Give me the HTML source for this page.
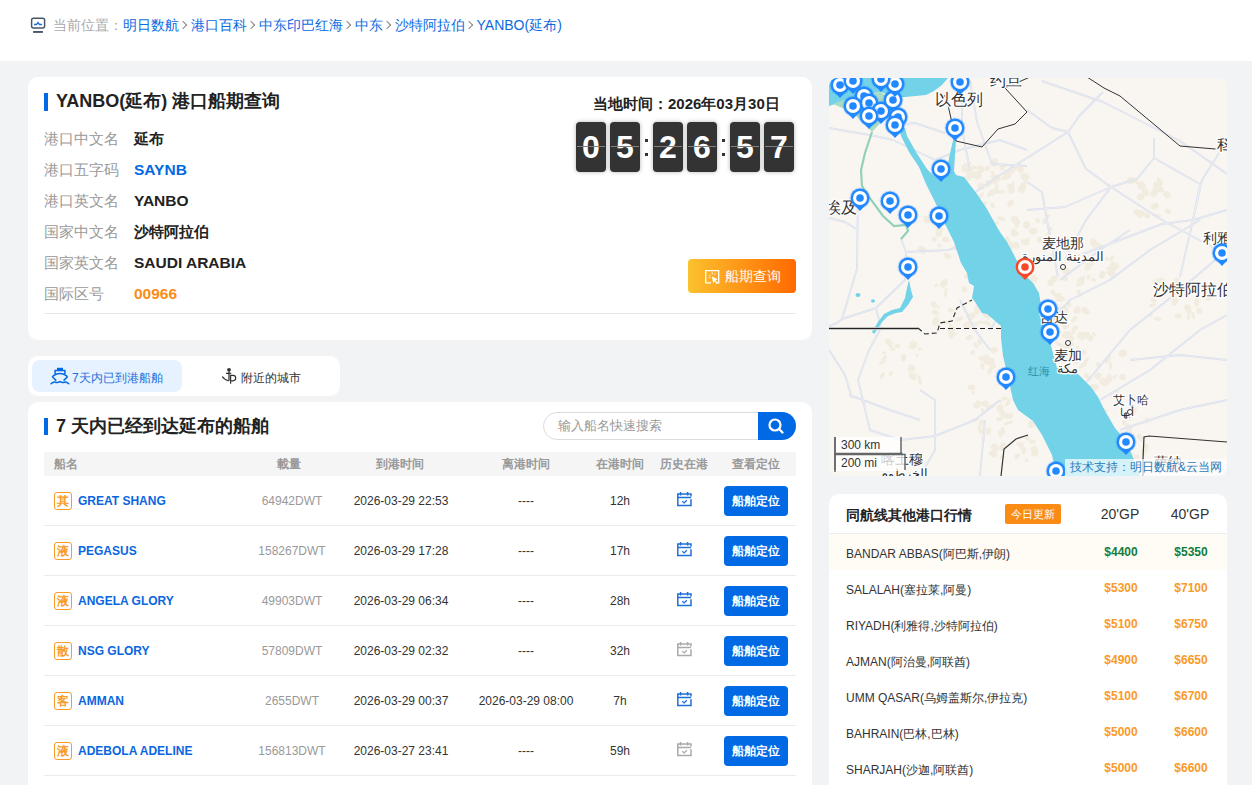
<!DOCTYPE html>
<html><head><meta charset="utf-8">
<style>
*{box-sizing:border-box;margin:0;padding:0}
html,body{width:1252px;height:785px;overflow:hidden}
body{background:#f2f3f5;font-family:"Liberation Sans",sans-serif;color:#333;position:relative}
.abs{position:absolute}
.hdr{left:0;top:0;width:1252px;height:61px;background:#fff}
.bc{left:52.5px;top:14px;font-size:14px;line-height:22px;white-space:nowrap;color:#aaa}
.bc a{color:#0c6be0;text-decoration:none}
.bc i{display:inline-block;width:6px;height:6px;border-right:1px solid #888;border-top:1px solid #888;transform:rotate(45deg);margin:0 5px 2px 1px}
.card{background:#fff;border-radius:10px}
.ttl{font-size:18px;font-weight:bold;color:#222;line-height:24px;white-space:nowrap}
.bar{width:4px;height:18px;background:#0069e3}
.lbl{font-size:15px;color:#999;line-height:20px;white-space:nowrap}
.val{font-size:15px;font-weight:bold;color:#222;line-height:20px;white-space:nowrap}
.dg{width:30px;height:50px;background:#333;border-radius:4px;color:#fff;font-size:32px;font-weight:bold;text-align:center;line-height:51px;box-shadow:0 0 4px rgba(0,0,0,.3)}
.dg:after{content:"";position:absolute;left:1px;right:1px;top:24px;height:1px;background:#808080}
.col{font-size:35px;font-weight:bold;color:#333;line-height:35px}
.tabtxt{font-size:12px;line-height:16px;white-space:nowrap}
.th{top:452px;height:24px;line-height:24px;font-size:12px;font-weight:bold;color:#999;text-align:center;white-space:nowrap}
.td{height:50px;line-height:50px;font-size:12px;color:#333;text-align:center;white-space:nowrap}
.sep{left:44px;width:752px;height:1px;background:#ebebeb}
.badge{width:18px;height:18px;border:1px solid #fa9a28;border-radius:3px;color:#fa9a28;font-size:12px;font-weight:bold;line-height:16px;text-align:center}
.nm{font-size:12px;font-weight:bold;color:#0a66e0;line-height:16px;white-space:nowrap}
.btn{width:64px;height:30px;border-radius:4px;background:#0069e3;color:#fff;font-size:12px;font-weight:bold;line-height:30px;text-align:center}
.pr{font-size:12px;line-height:40px;color:#333;white-space:nowrap}
.pv{font-size:12px;line-height:37px;font-weight:bold;color:#fa9a28;text-align:center;width:70px;white-space:nowrap}
</style></head><body>
<div class="abs hdr"></div>
<svg class="abs" style="left:30px;top:17px" width="16" height="16" viewBox="0 0 16 16">
<rect x="1.6" y="1.3" width="13" height="9.8" rx="2" fill="none" stroke="#4a5568" stroke-width="1.5"/>
<path d="M4 7.5h2.5l1.5-2 1.5 2H12" fill="none" stroke="#1e6fd9" stroke-width="1.3"/>
<rect x="3.1" y="14" width="9.8" height="1.9" fill="#4a5568"/>
</svg>
<div class="abs bc">当前位置：<a>明日数航</a><i></i><a>港口百科</a><i></i><a>中东印巴红海</a><i></i><a>中东</a><i></i><a>沙特阿拉伯</a><i></i><a>YANBO(延布)</a></div>

<!-- card 1 -->
<div class="abs card" style="left:28px;top:77px;width:784px;height:263px"></div>
<div class="abs bar" style="left:44px;top:93px"></div>
<div class="abs ttl" style="left:56px;top:89px">YANBO(延布) 港口船期查询</div>
<div class="abs lbl" style="left:44px;top:129px">港口中文名</div>
<div class="abs val" style="left:134px;top:129px">延布</div>
<div class="abs lbl" style="left:44px;top:160px">港口五字码</div>
<div class="abs val" style="left:134px;top:160px;color:#0069e3;font-size:15.5px">SAYNB</div>
<div class="abs lbl" style="left:44px;top:191px">港口英文名</div>
<div class="abs val" style="left:134px;top:191px;font-size:15.5px">YANBO</div>
<div class="abs lbl" style="left:44px;top:222px">国家中文名</div>
<div class="abs val" style="left:134px;top:222px">沙特阿拉伯</div>
<div class="abs lbl" style="left:44px;top:253px">国家英文名</div>
<div class="abs val" style="left:134px;top:253px;font-size:15.5px">SAUDI ARABIA</div>
<div class="abs lbl" style="left:44px;top:284px">国际区号</div>
<div class="abs val" style="left:134px;top:284px;color:#fa8c16;font-size:15.5px">00966</div>
<div class="abs" style="left:44px;top:313px;width:752px;height:1px;background:#e8e8e8"></div>

<div class="abs val" style="left:593px;top:94px">当地时间：2026年03月30日</div>
<div class="abs dg" style="left:576px;top:122px">0</div>
<div class="abs dg" style="left:610px;top:122px">5</div>
<div class="abs" style="left:645px;top:139px;width:3px;height:3px;background:#333"></div><div class="abs" style="left:645px;top:152.5px;width:3px;height:3px;background:#333"></div>
<div class="abs dg" style="left:653px;top:122px">2</div>
<div class="abs dg" style="left:687px;top:122px">6</div>
<div class="abs" style="left:722px;top:139px;width:3px;height:3px;background:#333"></div><div class="abs" style="left:722px;top:152.5px;width:3px;height:3px;background:#333"></div>
<div class="abs dg" style="left:730px;top:122px">5</div>
<div class="abs dg" style="left:764px;top:122px">7</div>

<div class="abs" style="left:688px;top:259px;width:108px;height:34px;border-radius:4px;background:linear-gradient(90deg,#fcc12e,#ff6a00)"></div>
<svg class="abs" style="left:704px;top:269px" width="17" height="17" viewBox="0 0 17 17">
<path d="M7 13.8H1.7V1.7h13v12.1h-3" fill="none" stroke="#fff" stroke-width="1.3"/>
<path d="M8 7.5l1.2 7 1.3-2.2 2.3 2.4 0.9-0.9-2.3-2.3 2.3-1.2z" fill="#fff"/>
<path d="M8.2 3.3v2 M5 5.8l1.5 1 M11.4 4.4l-1.2 1.4 M4.6 8.7h1.8" stroke="#fff" stroke-width="1"/>
</svg>
<div class="abs" style="left:725px;top:266px;font-size:14px;line-height:20px;color:#fff">船期查询</div>


<!-- tabs -->
<div class="abs card" style="left:28px;top:356px;width:312px;height:40px"></div>
<div class="abs" style="left:32px;top:360px;width:150px;height:32px;border-radius:8px;background:#e6f2ff"></div>
<svg class="abs" style="left:46px;top:362px" width="40" height="30" viewBox="46 362 40 30">
<rect x="57" y="367.8" width="6" height="2.6" fill="#0069e3"/>
<path d="M55.1 374.3V370.6H64.9V374.3" fill="none" stroke="#0069e3" stroke-width="1.5"/>
<path d="M56.2 380.6L52.6 377Q52.4 376.4 53.2 375.9Q56.5 373.6 59.9 373.6Q63.3 373.6 66.6 375.9Q67.4 376.4 67.2 377L63.6 380.6" fill="none" stroke="#0069e3" stroke-width="1.5" stroke-linejoin="round"/>
<path d="M51 383.8Q53.5 381.6 55.4 382.2Q57.6 383 59.9 381.6Q62.2 383 64.4 382.2Q66.3 381.6 68.8 383.8" fill="none" stroke="#0069e3" stroke-width="1.5" stroke-linecap="round"/>
</svg>
<div class="abs tabtxt" style="left:72px;top:370px;color:#1e6fd9">7天内已到港船舶</div>
<svg class="abs" style="left:216px;top:362px" width="30" height="30" viewBox="216 362 30 30">
<circle cx="229" cy="369.8" r="1.9" fill="#333"/>
<path d="M226 373.4h5.2 M229 371.5v9.3 M222.3 376.5Q224 379.5 228.6 380.8" fill="none" stroke="#333" stroke-width="1.3"/>
<path d="M230.6 383.8V375.4h2.4a2.7 2.7 0 0 1 0 5.4h-2.4" fill="none" stroke="#333" stroke-width="1.2"/>
</svg>
<div class="abs tabtxt" style="left:241px;top:370px;color:#333">附近的城市</div>

<!-- table card -->
<div class="abs card" style="left:28px;top:402px;width:784px;height:400px"></div>
<div class="abs bar" style="left:44px;top:418px;height:17px"></div>
<div class="abs ttl" style="left:56px;top:414px">7 天内已经到达延布的船舶</div>
<div class="abs" style="left:543px;top:412px;width:230px;height:28px;border:1px solid #dcdcdc;border-radius:14px"></div>
<div class="abs" style="left:558px;top:416px;font-size:13px;line-height:20px;color:#999">输入船名快速搜索</div>
<div class="abs" style="left:758px;top:412px;width:38px;height:28px;background:#0069e3;border-radius:0 14px 14px 0"></div>
<svg class="abs" style="left:767px;top:417px" width="18" height="18" viewBox="0 0 18 18">
<circle cx="8" cy="8" r="5.5" fill="none" stroke="#fff" stroke-width="2.2"/>
<path d="M12 12l3.5 3.5" stroke="#fff" stroke-width="2.4" stroke-linecap="round"/>
</svg>
<div class="abs" style="left:44px;top:452px;width:752px;height:24px;background:#f5f5f5"></div>
<div class="abs th" style="left:54px;text-align:left">船名</div>
<div class="abs th" style="left:249px;width:80px">載量</div>
<div class="abs th" style="left:340px;width:120px">到港时间</div>
<div class="abs th" style="left:466px;width:120px">离港时间</div>
<div class="abs th" style="left:580px;width:80px">在港时间</div>
<div class="abs th" style="left:644px;width:80px">历史在港</div>
<div class="abs th" style="left:716px;width:80px">查看定位</div>
<div class="abs badge" style="left:54px;top:492px">其</div>
<div class="abs nm" style="left:78px;top:493px">GREAT SHANG</div>
<div class="abs td" style="left:242px;top:476px;width:100px;color:#999">64942DWT</div>
<div class="abs td" style="left:331px;top:476px;width:140px">2026-03-29 22:53</div>
<div class="abs td" style="left:456px;top:476px;width:140px">----</div>
<div class="abs td" style="left:580px;top:476px;width:80px">12h</div>
<svg class="abs" style="left:670px;top:486px" width="30" height="30" viewBox="670 486 30 30">
<path d="M691 496.5V493.9H677.8V505.4H691V499.3" fill="none" stroke="#1e6fd9" stroke-width="1.5"/>
<path d="M677.8 497.4H691 M680.6 492v3.4 M687.6 492v3.4" stroke="#1e6fd9" stroke-width="1.5"/>
<path d="M682.2 501.2l2 1.7 2.6-2.6" fill="none" stroke="#1e6fd9" stroke-width="1.3"/>
</svg>
<div class="abs btn" style="left:724px;top:486px">船舶定位</div>
<div class="abs sep" style="top:525px"></div>
<div class="abs badge" style="left:54px;top:542px">液</div>
<div class="abs nm" style="left:78px;top:543px">PEGASUS</div>
<div class="abs td" style="left:242px;top:526px;width:100px;color:#999">158267DWT</div>
<div class="abs td" style="left:331px;top:526px;width:140px">2026-03-29 17:28</div>
<div class="abs td" style="left:456px;top:526px;width:140px">----</div>
<div class="abs td" style="left:580px;top:526px;width:80px">17h</div>
<svg class="abs" style="left:670px;top:536px" width="30" height="30" viewBox="670 486 30 30">
<path d="M691 496.5V493.9H677.8V505.4H691V499.3" fill="none" stroke="#1e6fd9" stroke-width="1.5"/>
<path d="M677.8 497.4H691 M680.6 492v3.4 M687.6 492v3.4" stroke="#1e6fd9" stroke-width="1.5"/>
<path d="M682.2 501.2l2 1.7 2.6-2.6" fill="none" stroke="#1e6fd9" stroke-width="1.3"/>
</svg>
<div class="abs btn" style="left:724px;top:536px">船舶定位</div>
<div class="abs sep" style="top:575px"></div>
<div class="abs badge" style="left:54px;top:592px">液</div>
<div class="abs nm" style="left:78px;top:593px">ANGELA GLORY</div>
<div class="abs td" style="left:242px;top:576px;width:100px;color:#999">49903DWT</div>
<div class="abs td" style="left:331px;top:576px;width:140px">2026-03-29 06:34</div>
<div class="abs td" style="left:456px;top:576px;width:140px">----</div>
<div class="abs td" style="left:580px;top:576px;width:80px">28h</div>
<svg class="abs" style="left:670px;top:586px" width="30" height="30" viewBox="670 486 30 30">
<path d="M691 496.5V493.9H677.8V505.4H691V499.3" fill="none" stroke="#1e6fd9" stroke-width="1.5"/>
<path d="M677.8 497.4H691 M680.6 492v3.4 M687.6 492v3.4" stroke="#1e6fd9" stroke-width="1.5"/>
<path d="M682.2 501.2l2 1.7 2.6-2.6" fill="none" stroke="#1e6fd9" stroke-width="1.3"/>
</svg>
<div class="abs btn" style="left:724px;top:586px">船舶定位</div>
<div class="abs sep" style="top:625px"></div>
<div class="abs badge" style="left:54px;top:642px">散</div>
<div class="abs nm" style="left:78px;top:643px">NSG GLORY</div>
<div class="abs td" style="left:242px;top:626px;width:100px;color:#999">57809DWT</div>
<div class="abs td" style="left:331px;top:626px;width:140px">2026-03-29 02:32</div>
<div class="abs td" style="left:456px;top:626px;width:140px">----</div>
<div class="abs td" style="left:580px;top:626px;width:80px">32h</div>
<svg class="abs" style="left:670px;top:636px" width="30" height="30" viewBox="670 486 30 30">
<path d="M691 496.5V493.9H677.8V505.4H691V499.3" fill="none" stroke="#aaa" stroke-width="1.5"/>
<path d="M677.8 497.4H691 M680.6 492v3.4 M687.6 492v3.4" stroke="#aaa" stroke-width="1.5"/>
<path d="M682.2 501.2l2 1.7 2.6-2.6" fill="none" stroke="#aaa" stroke-width="1.3"/>
</svg>
<div class="abs btn" style="left:724px;top:636px">船舶定位</div>
<div class="abs sep" style="top:675px"></div>
<div class="abs badge" style="left:54px;top:692px">客</div>
<div class="abs nm" style="left:78px;top:693px">AMMAN</div>
<div class="abs td" style="left:242px;top:676px;width:100px;color:#999">2655DWT</div>
<div class="abs td" style="left:331px;top:676px;width:140px">2026-03-29 00:37</div>
<div class="abs td" style="left:456px;top:676px;width:140px">2026-03-29 08:00</div>
<div class="abs td" style="left:580px;top:676px;width:80px">7h</div>
<svg class="abs" style="left:670px;top:686px" width="30" height="30" viewBox="670 486 30 30">
<path d="M691 496.5V493.9H677.8V505.4H691V499.3" fill="none" stroke="#1e6fd9" stroke-width="1.5"/>
<path d="M677.8 497.4H691 M680.6 492v3.4 M687.6 492v3.4" stroke="#1e6fd9" stroke-width="1.5"/>
<path d="M682.2 501.2l2 1.7 2.6-2.6" fill="none" stroke="#1e6fd9" stroke-width="1.3"/>
</svg>
<div class="abs btn" style="left:724px;top:686px">船舶定位</div>
<div class="abs sep" style="top:725px"></div>
<div class="abs badge" style="left:54px;top:742px">液</div>
<div class="abs nm" style="left:78px;top:743px">ADEBOLA ADELINE</div>
<div class="abs td" style="left:242px;top:726px;width:100px;color:#999">156813DWT</div>
<div class="abs td" style="left:331px;top:726px;width:140px">2026-03-27 23:41</div>
<div class="abs td" style="left:456px;top:726px;width:140px">----</div>
<div class="abs td" style="left:580px;top:726px;width:80px">59h</div>
<svg class="abs" style="left:670px;top:736px" width="30" height="30" viewBox="670 486 30 30">
<path d="M691 496.5V493.9H677.8V505.4H691V499.3" fill="none" stroke="#aaa" stroke-width="1.5"/>
<path d="M677.8 497.4H691 M680.6 492v3.4 M687.6 492v3.4" stroke="#aaa" stroke-width="1.5"/>
<path d="M682.2 501.2l2 1.7 2.6-2.6" fill="none" stroke="#aaa" stroke-width="1.3"/>
</svg>
<div class="abs btn" style="left:724px;top:736px">船舶定位</div>
<div class="abs sep" style="top:775px"></div>

<!-- right -->
<!--MAP--><svg class="abs" style="left:829px;top:78px;border-radius:8px" width="398" height="398" viewBox="829 78 398 398">
<defs><clipPath id="mc"><rect x="829" y="78" width="398" height="398" rx="8"/></clipPath><filter id="bl"><feGaussianBlur stdDeviation="2"/></filter></defs>
<g clip-path="url(#mc)">
<rect x="829" y="78" width="398" height="398" fill="#f9f6f1"/>
<g fill="#f1ecdf">
<ellipse cx="991.2" cy="182.5" rx="3.8" ry="1.7" transform="rotate(137 991.2 182.5)"/>
<ellipse cx="979.7" cy="204.1" rx="4.7" ry="2.0" transform="rotate(22 979.7 204.1)"/>
<ellipse cx="996.7" cy="178.5" rx="1.8" ry="2.6" transform="rotate(144 996.7 178.5)"/>
<ellipse cx="981.2" cy="186.2" rx="3.7" ry="3.9" transform="rotate(147 981.2 186.2)"/>
<ellipse cx="1004.3" cy="177.5" rx="2.3" ry="2.9" transform="rotate(34 1004.3 177.5)"/>
<ellipse cx="989.5" cy="182.2" rx="1.9" ry="2.3" transform="rotate(174 989.5 182.2)"/>
<ellipse cx="984.0" cy="204.1" rx="3.7" ry="2.4" transform="rotate(140 984.0 204.1)"/>
<ellipse cx="1010.6" cy="203.2" rx="3.7" ry="2.7" transform="rotate(136 1010.6 203.2)"/>
<ellipse cx="996.4" cy="190.7" rx="3.5" ry="2.6" transform="rotate(76 996.4 190.7)"/>
<ellipse cx="987.4" cy="184.0" rx="4.2" ry="1.7" transform="rotate(76 987.4 184.0)"/>
<ellipse cx="1001.3" cy="218.8" rx="4.1" ry="2.2" transform="rotate(18 1001.3 218.8)"/>
<ellipse cx="980.9" cy="195.9" rx="4.1" ry="1.9" transform="rotate(125 980.9 195.9)"/>
<ellipse cx="996.1" cy="223.1" rx="1.8" ry="2.9" transform="rotate(80 996.1 223.1)"/>
<ellipse cx="992.0" cy="192.5" rx="3.2" ry="3.5" transform="rotate(17 992.0 192.5)"/>
<ellipse cx="1017.0" cy="222.2" rx="3.2" ry="3.2" transform="rotate(15 1017.0 222.2)"/>
<ellipse cx="1011.6" cy="190.5" rx="3.5" ry="3.2" transform="rotate(114 1011.6 190.5)"/>
<ellipse cx="989.2" cy="194.3" rx="3.8" ry="1.6" transform="rotate(118 989.2 194.3)"/>
<ellipse cx="992.8" cy="205.5" rx="3.2" ry="2.0" transform="rotate(73 992.8 205.5)"/>
<ellipse cx="1015.2" cy="219.9" rx="2.9" ry="3.7" transform="rotate(20 1015.2 219.9)"/>
<ellipse cx="1016.7" cy="226.1" rx="2.5" ry="1.8" transform="rotate(110 1016.7 226.1)"/>
<ellipse cx="1044.6" cy="221.1" rx="3.0" ry="2.4" transform="rotate(97 1044.6 221.1)"/>
<ellipse cx="1048.3" cy="216.0" rx="2.1" ry="2.1" transform="rotate(59 1048.3 216.0)"/>
<ellipse cx="1010.5" cy="243.2" rx="2.1" ry="2.2" transform="rotate(37 1010.5 243.2)"/>
<ellipse cx="1026.8" cy="224.8" rx="3.5" ry="3.9" transform="rotate(176 1026.8 224.8)"/>
<ellipse cx="1044.4" cy="248.0" rx="3.8" ry="3.3" transform="rotate(116 1044.4 248.0)"/>
<ellipse cx="1046.0" cy="241.2" rx="4.6" ry="3.5" transform="rotate(100 1046.0 241.2)"/>
<ellipse cx="1025.9" cy="225.8" rx="3.2" ry="2.5" transform="rotate(48 1025.9 225.8)"/>
<ellipse cx="1012.7" cy="218.4" rx="2.1" ry="2.4" transform="rotate(13 1012.7 218.4)"/>
<ellipse cx="1014.1" cy="232.7" rx="3.4" ry="3.9" transform="rotate(157 1014.1 232.7)"/>
<ellipse cx="1011.0" cy="245.0" rx="3.6" ry="1.9" transform="rotate(64 1011.0 245.0)"/>
<ellipse cx="1048.2" cy="234.1" rx="3.2" ry="1.8" transform="rotate(124 1048.2 234.1)"/>
<ellipse cx="1049.7" cy="228.6" rx="3.2" ry="1.7" transform="rotate(26 1049.7 228.6)"/>
<ellipse cx="1040.0" cy="239.6" rx="3.2" ry="3.2" transform="rotate(132 1040.0 239.6)"/>
<ellipse cx="1010.9" cy="248.0" rx="3.3" ry="1.9" transform="rotate(139 1010.9 248.0)"/>
<ellipse cx="1046.6" cy="240.3" rx="2.5" ry="3.1" transform="rotate(23 1046.6 240.3)"/>
<ellipse cx="1037.8" cy="220.4" rx="2.8" ry="1.9" transform="rotate(57 1037.8 220.4)"/>
<ellipse cx="1066.0" cy="316.7" rx="2.7" ry="2.1" transform="rotate(49 1066.0 316.7)"/>
<ellipse cx="1074.2" cy="319.1" rx="4.1" ry="2.1" transform="rotate(132 1074.2 319.1)"/>
<ellipse cx="1064.8" cy="313.9" rx="5.0" ry="3.5" transform="rotate(120 1064.8 313.9)"/>
<ellipse cx="1057.8" cy="311.6" rx="4.8" ry="2.6" transform="rotate(89 1057.8 311.6)"/>
<ellipse cx="1078.7" cy="291.9" rx="2.3" ry="2.1" transform="rotate(50 1078.7 291.9)"/>
<ellipse cx="1060.1" cy="299.0" rx="4.9" ry="3.0" transform="rotate(0 1060.1 299.0)"/>
<ellipse cx="1064.4" cy="309.2" rx="4.3" ry="1.7" transform="rotate(169 1064.4 309.2)"/>
<ellipse cx="1053.6" cy="293.3" rx="4.0" ry="2.0" transform="rotate(45 1053.6 293.3)"/>
<ellipse cx="1063.0" cy="308.2" rx="1.8" ry="3.9" transform="rotate(101 1063.0 308.2)"/>
<ellipse cx="1063.9" cy="314.6" rx="1.8" ry="1.9" transform="rotate(32 1063.9 314.6)"/>
<ellipse cx="1050.8" cy="305.4" rx="3.1" ry="3.1" transform="rotate(156 1050.8 305.4)"/>
<ellipse cx="1074.8" cy="328.8" rx="3.8" ry="2.4" transform="rotate(140 1074.8 328.8)"/>
<ellipse cx="1066.4" cy="271.3" rx="4.3" ry="3.3" transform="rotate(26 1066.4 271.3)"/>
<ellipse cx="1065.8" cy="326.0" rx="3.0" ry="3.7" transform="rotate(54 1065.8 326.0)"/>
<ellipse cx="1050.8" cy="282.8" rx="3.3" ry="3.4" transform="rotate(83 1050.8 282.8)"/>
<ellipse cx="1057.8" cy="295.1" rx="2.0" ry="3.8" transform="rotate(90 1057.8 295.1)"/>
<ellipse cx="1076.9" cy="309.7" rx="4.4" ry="2.8" transform="rotate(128 1076.9 309.7)"/>
<ellipse cx="1053.9" cy="279.1" rx="3.3" ry="3.7" transform="rotate(46 1053.9 279.1)"/>
<ellipse cx="1079.3" cy="361.0" rx="2.0" ry="1.9" transform="rotate(158 1079.3 361.0)"/>
<ellipse cx="1084.0" cy="352.3" rx="2.6" ry="2.8" transform="rotate(142 1084.0 352.3)"/>
<ellipse cx="1074.3" cy="361.1" rx="4.6" ry="1.6" transform="rotate(48 1074.3 361.1)"/>
<ellipse cx="1066.1" cy="360.9" rx="3.3" ry="2.9" transform="rotate(16 1066.1 360.9)"/>
<ellipse cx="1072.7" cy="354.5" rx="3.3" ry="2.8" transform="rotate(177 1072.7 354.5)"/>
<ellipse cx="1066.1" cy="350.3" rx="4.3" ry="2.8" transform="rotate(63 1066.1 350.3)"/>
<ellipse cx="1083.0" cy="365.1" rx="4.8" ry="2.1" transform="rotate(143 1083.0 365.1)"/>
<ellipse cx="1090.7" cy="338.1" rx="3.1" ry="2.5" transform="rotate(100 1090.7 338.1)"/>
<ellipse cx="1072.7" cy="332.9" rx="2.3" ry="1.7" transform="rotate(171 1072.7 332.9)"/>
<ellipse cx="1067.1" cy="334.9" rx="4.2" ry="3.8" transform="rotate(164 1067.1 334.9)"/>
<ellipse cx="1081.4" cy="335.7" rx="4.6" ry="3.9" transform="rotate(56 1081.4 335.7)"/>
<ellipse cx="1084.9" cy="333.8" rx="4.6" ry="1.9" transform="rotate(170 1084.9 333.8)"/>
<ellipse cx="1088.3" cy="336.5" rx="3.0" ry="2.8" transform="rotate(86 1088.3 336.5)"/>
<ellipse cx="1071.9" cy="344.3" rx="1.8" ry="2.4" transform="rotate(86 1071.9 344.3)"/>
<ellipse cx="1077.2" cy="347.6" rx="1.6" ry="2.3" transform="rotate(159 1077.2 347.6)"/>
<ellipse cx="1066.8" cy="368.4" rx="1.9" ry="3.8" transform="rotate(58 1066.8 368.4)"/>
<ellipse cx="1093.9" cy="334.2" rx="2.4" ry="1.6" transform="rotate(46 1093.9 334.2)"/>
<ellipse cx="1065.8" cy="335.2" rx="3.0" ry="3.8" transform="rotate(66 1065.8 335.2)"/>
<ellipse cx="1091.2" cy="401.8" rx="3.3" ry="2.7" transform="rotate(83 1091.2 401.8)"/>
<ellipse cx="1078.6" cy="377.9" rx="3.9" ry="2.6" transform="rotate(18 1078.6 377.9)"/>
<ellipse cx="1085.8" cy="375.8" rx="1.8" ry="2.2" transform="rotate(155 1085.8 375.8)"/>
<ellipse cx="1109.2" cy="378.3" rx="4.5" ry="2.6" transform="rotate(86 1109.2 378.3)"/>
<ellipse cx="1114.8" cy="395.9" rx="4.7" ry="3.1" transform="rotate(11 1114.8 395.9)"/>
<ellipse cx="1096.1" cy="386.9" rx="1.9" ry="1.9" transform="rotate(12 1096.1 386.9)"/>
<ellipse cx="1082.2" cy="421.6" rx="3.7" ry="2.8" transform="rotate(52 1082.2 421.6)"/>
<ellipse cx="1086.6" cy="400.0" rx="2.1" ry="2.4" transform="rotate(4 1086.6 400.0)"/>
<ellipse cx="1114.8" cy="376.8" rx="1.6" ry="2.8" transform="rotate(48 1114.8 376.8)"/>
<ellipse cx="1095.6" cy="387.3" rx="3.1" ry="3.1" transform="rotate(166 1095.6 387.3)"/>
<ellipse cx="1092.3" cy="399.8" rx="4.4" ry="2.5" transform="rotate(129 1092.3 399.8)"/>
<ellipse cx="1087.3" cy="385.8" rx="2.3" ry="2.0" transform="rotate(180 1087.3 385.8)"/>
<ellipse cx="1104.2" cy="382.0" rx="5.0" ry="4.0" transform="rotate(33 1104.2 382.0)"/>
<ellipse cx="1075.6" cy="406.3" rx="4.6" ry="2.6" transform="rotate(14 1075.6 406.3)"/>
<ellipse cx="1078.4" cy="417.1" rx="4.5" ry="3.2" transform="rotate(72 1078.4 417.1)"/>
<ellipse cx="1099.0" cy="409.6" rx="1.7" ry="2.0" transform="rotate(68 1099.0 409.6)"/>
<ellipse cx="1092.8" cy="388.2" rx="4.9" ry="3.9" transform="rotate(140 1092.8 388.2)"/>
<ellipse cx="1087.9" cy="376.7" rx="4.6" ry="2.0" transform="rotate(46 1087.9 376.7)"/>
<ellipse cx="1105.0" cy="446.4" rx="3.2" ry="2.8" transform="rotate(51 1105.0 446.4)"/>
<ellipse cx="1114.9" cy="458.3" rx="1.8" ry="3.5" transform="rotate(36 1114.9 458.3)"/>
<ellipse cx="1121.0" cy="436.3" rx="1.6" ry="2.3" transform="rotate(59 1121.0 436.3)"/>
<ellipse cx="1108.4" cy="463.7" rx="4.5" ry="1.9" transform="rotate(152 1108.4 463.7)"/>
<ellipse cx="1120.6" cy="444.8" rx="4.9" ry="1.9" transform="rotate(158 1120.6 444.8)"/>
<ellipse cx="1130.7" cy="436.3" rx="4.4" ry="3.7" transform="rotate(160 1130.7 436.3)"/>
<ellipse cx="1122.2" cy="456.0" rx="3.3" ry="3.8" transform="rotate(129 1122.2 456.0)"/>
<ellipse cx="1127.7" cy="459.4" rx="1.6" ry="3.2" transform="rotate(174 1127.7 459.4)"/>
<ellipse cx="1143.2" cy="454.3" rx="1.8" ry="1.6" transform="rotate(163 1143.2 454.3)"/>
<ellipse cx="1119.4" cy="438.1" rx="4.4" ry="2.9" transform="rotate(160 1119.4 438.1)"/>
<ellipse cx="1105.8" cy="450.9" rx="2.4" ry="2.2" transform="rotate(116 1105.8 450.9)"/>
<ellipse cx="1136.9" cy="457.4" rx="3.3" ry="2.8" transform="rotate(168 1136.9 457.4)"/>
<ellipse cx="1126.0" cy="457.4" rx="3.2" ry="3.5" transform="rotate(67 1126.0 457.4)"/>
<ellipse cx="1114.4" cy="457.7" rx="2.3" ry="3.1" transform="rotate(117 1114.4 457.7)"/>
<ellipse cx="1124.8" cy="446.5" rx="3.2" ry="3.2" transform="rotate(11 1124.8 446.5)"/>
<ellipse cx="1129.7" cy="454.3" rx="1.8" ry="1.9" transform="rotate(65 1129.7 454.3)"/>
<ellipse cx="1131.1" cy="455.8" rx="3.7" ry="1.8" transform="rotate(123 1131.1 455.8)"/>
<ellipse cx="1107.4" cy="443.1" rx="3.9" ry="3.2" transform="rotate(172 1107.4 443.1)"/>
<ellipse cx="1009.7" cy="186.3" rx="2.5" ry="2.7" transform="rotate(30 1009.7 186.3)"/>
<ellipse cx="1024.8" cy="181.5" rx="2.6" ry="1.7" transform="rotate(121 1024.8 181.5)"/>
<ellipse cx="995.5" cy="178.8" rx="4.4" ry="3.9" transform="rotate(115 995.5 178.8)"/>
<ellipse cx="1024.8" cy="176.6" rx="4.7" ry="3.8" transform="rotate(19 1024.8 176.6)"/>
<ellipse cx="1012.4" cy="169.3" rx="3.3" ry="3.9" transform="rotate(33 1012.4 169.3)"/>
<ellipse cx="1013.1" cy="184.0" rx="2.5" ry="1.8" transform="rotate(93 1013.1 184.0)"/>
<ellipse cx="1001.9" cy="191.9" rx="3.2" ry="1.6" transform="rotate(0 1001.9 191.9)"/>
<ellipse cx="1023.5" cy="185.4" rx="2.9" ry="3.3" transform="rotate(106 1023.5 185.4)"/>
<ellipse cx="1005.3" cy="174.5" rx="4.4" ry="1.5" transform="rotate(86 1005.3 174.5)"/>
<ellipse cx="1020.2" cy="168.6" rx="4.7" ry="3.3" transform="rotate(74 1020.2 168.6)"/>
<ellipse cx="1002.6" cy="166.9" rx="2.9" ry="3.7" transform="rotate(19 1002.6 166.9)"/>
<ellipse cx="1005.8" cy="177.8" rx="2.5" ry="1.6" transform="rotate(26 1005.8 177.8)"/>
<ellipse cx="996.5" cy="184.9" rx="3.7" ry="1.9" transform="rotate(68 996.5 184.9)"/>
<ellipse cx="1008.1" cy="174.5" rx="4.2" ry="3.5" transform="rotate(109 1008.1 174.5)"/>
<ellipse cx="1021.5" cy="189.4" rx="3.7" ry="3.8" transform="rotate(141 1021.5 189.4)"/>
<ellipse cx="1011.5" cy="186.6" rx="1.7" ry="3.3" transform="rotate(115 1011.5 186.6)"/>
<ellipse cx="1013.4" cy="169.2" rx="4.5" ry="2.7" transform="rotate(140 1013.4 169.2)"/>
<ellipse cx="998.8" cy="179.2" rx="2.7" ry="2.2" transform="rotate(167 998.8 179.2)"/>
<ellipse cx="972.8" cy="173.1" rx="2.6" ry="2.9" transform="rotate(100 972.8 173.1)"/>
<ellipse cx="968.6" cy="172.9" rx="1.8" ry="2.8" transform="rotate(127 968.6 172.9)"/>
<ellipse cx="981.5" cy="169.1" rx="2.7" ry="3.4" transform="rotate(109 981.5 169.1)"/>
<ellipse cx="969.2" cy="163.8" rx="1.8" ry="2.4" transform="rotate(23 969.2 163.8)"/>
<ellipse cx="974.6" cy="167.4" rx="4.3" ry="2.0" transform="rotate(5 974.6 167.4)"/>
<ellipse cx="987.5" cy="168.3" rx="2.9" ry="2.8" transform="rotate(96 987.5 168.3)"/>
<ellipse cx="973.1" cy="175.0" rx="3.2" ry="2.9" transform="rotate(92 973.1 175.0)"/>
<ellipse cx="968.8" cy="170.1" rx="3.7" ry="3.7" transform="rotate(55 968.8 170.1)"/>
<ellipse cx="967.8" cy="177.9" rx="2.8" ry="3.1" transform="rotate(110 967.8 177.9)"/>
<ellipse cx="993.6" cy="177.0" rx="4.6" ry="1.6" transform="rotate(8 993.6 177.0)"/>
<ellipse cx="977.8" cy="175.3" rx="4.3" ry="3.9" transform="rotate(125 977.8 175.3)"/>
<ellipse cx="965.0" cy="167.8" rx="4.7" ry="3.6" transform="rotate(119 965.0 167.8)"/>
<ellipse cx="994.2" cy="165.0" rx="1.9" ry="1.9" transform="rotate(133 994.2 165.0)"/>
<ellipse cx="994.2" cy="162.2" rx="4.4" ry="3.3" transform="rotate(117 994.2 162.2)"/>
<ellipse cx="967.6" cy="175.5" rx="1.5" ry="1.8" transform="rotate(145 967.6 175.5)"/>
<ellipse cx="992.6" cy="172.9" rx="2.6" ry="1.8" transform="rotate(64 992.6 172.9)"/>
<ellipse cx="980.8" cy="168.7" rx="4.2" ry="1.7" transform="rotate(76 980.8 168.7)"/>
<ellipse cx="980.7" cy="171.7" rx="2.9" ry="2.1" transform="rotate(153 980.7 171.7)"/>
<ellipse cx="950.0" cy="331.5" rx="5.0" ry="2.2" transform="rotate(80 950.0 331.5)"/>
<ellipse cx="975.8" cy="345.4" rx="3.2" ry="2.1" transform="rotate(63 975.8 345.4)"/>
<ellipse cx="951.2" cy="326.5" rx="3.8" ry="1.6" transform="rotate(49 951.2 326.5)"/>
<ellipse cx="969.9" cy="337.0" rx="3.0" ry="2.1" transform="rotate(170 969.9 337.0)"/>
<ellipse cx="967.0" cy="324.8" rx="3.2" ry="3.2" transform="rotate(107 967.0 324.8)"/>
<ellipse cx="964.5" cy="325.9" rx="1.5" ry="2.2" transform="rotate(129 964.5 325.9)"/>
<ellipse cx="952.7" cy="329.8" rx="2.2" ry="3.4" transform="rotate(49 952.7 329.8)"/>
<ellipse cx="959.2" cy="318.9" rx="4.2" ry="2.2" transform="rotate(159 959.2 318.9)"/>
<ellipse cx="969.8" cy="317.5" rx="2.3" ry="2.5" transform="rotate(170 969.8 317.5)"/>
<ellipse cx="952.3" cy="333.8" rx="4.7" ry="1.6" transform="rotate(6 952.3 333.8)"/>
<ellipse cx="989.0" cy="315.7" rx="1.7" ry="1.7" transform="rotate(100 989.0 315.7)"/>
<ellipse cx="968.0" cy="338.5" rx="2.6" ry="1.8" transform="rotate(20 968.0 338.5)"/>
<ellipse cx="987.3" cy="323.2" rx="2.1" ry="3.8" transform="rotate(119 987.3 323.2)"/>
<ellipse cx="951.3" cy="336.6" rx="2.8" ry="2.4" transform="rotate(84 951.3 336.6)"/>
<ellipse cx="967.7" cy="314.4" rx="1.8" ry="1.7" transform="rotate(107 967.7 314.4)"/>
<ellipse cx="988.2" cy="314.9" rx="4.9" ry="2.0" transform="rotate(91 988.2 314.9)"/>
<ellipse cx="980.7" cy="322.3" rx="4.3" ry="1.7" transform="rotate(180 980.7 322.3)"/>
<ellipse cx="968.9" cy="324.9" rx="4.7" ry="2.0" transform="rotate(93 968.9 324.9)"/>
<ellipse cx="999.5" cy="419.0" rx="3.7" ry="2.1" transform="rotate(160 999.5 419.0)"/>
<ellipse cx="1000.7" cy="401.6" rx="1.6" ry="1.7" transform="rotate(15 1000.7 401.6)"/>
<ellipse cx="980.3" cy="429.9" rx="4.6" ry="2.3" transform="rotate(69 980.3 429.9)"/>
<ellipse cx="983.4" cy="438.2" rx="1.7" ry="3.4" transform="rotate(176 983.4 438.2)"/>
<ellipse cx="982.7" cy="411.0" rx="1.5" ry="3.4" transform="rotate(162 982.7 411.0)"/>
<ellipse cx="1007.9" cy="402.6" rx="4.4" ry="1.8" transform="rotate(119 1007.9 402.6)"/>
<ellipse cx="1008.2" cy="415.5" rx="2.4" ry="2.6" transform="rotate(126 1008.2 415.5)"/>
<ellipse cx="975.3" cy="419.9" rx="1.5" ry="3.8" transform="rotate(77 975.3 419.9)"/>
<ellipse cx="1002.9" cy="430.9" rx="3.6" ry="2.3" transform="rotate(81 1002.9 430.9)"/>
<ellipse cx="988.4" cy="431.4" rx="3.6" ry="2.8" transform="rotate(100 988.4 431.4)"/>
<ellipse cx="1000.1" cy="409.9" rx="1.7" ry="1.6" transform="rotate(141 1000.1 409.9)"/>
<ellipse cx="991.8" cy="406.4" rx="3.0" ry="1.8" transform="rotate(18 991.8 406.4)"/>
<ellipse cx="980.6" cy="403.4" rx="1.8" ry="2.7" transform="rotate(114 980.6 403.4)"/>
<ellipse cx="976.9" cy="405.3" rx="3.1" ry="3.7" transform="rotate(60 976.9 405.3)"/>
<ellipse cx="999.9" cy="433.9" rx="3.8" ry="1.8" transform="rotate(75 999.9 433.9)"/>
<ellipse cx="981.8" cy="422.7" rx="2.8" ry="3.3" transform="rotate(50 981.8 422.7)"/>
<ellipse cx="987.6" cy="407.4" rx="2.3" ry="2.2" transform="rotate(148 987.6 407.4)"/>
<ellipse cx="977.5" cy="402.6" rx="2.4" ry="2.1" transform="rotate(134 977.5 402.6)"/>
<ellipse cx="1018.5" cy="278.5" rx="3.8" ry="4.0" transform="rotate(26 1018.5 278.5)"/>
<ellipse cx="1000.4" cy="283.0" rx="2.3" ry="2.6" transform="rotate(95 1000.4 283.0)"/>
<ellipse cx="1003.2" cy="247.6" rx="1.9" ry="2.0" transform="rotate(149 1003.2 247.6)"/>
<ellipse cx="1015.5" cy="234.5" rx="3.3" ry="1.9" transform="rotate(154 1015.5 234.5)"/>
<ellipse cx="1020.8" cy="276.7" rx="4.8" ry="1.8" transform="rotate(152 1020.8 276.7)"/>
<ellipse cx="1056.8" cy="251.0" rx="1.6" ry="2.4" transform="rotate(11 1056.8 251.0)"/>
<ellipse cx="1016.3" cy="245.3" rx="3.6" ry="3.1" transform="rotate(52 1016.3 245.3)"/>
<ellipse cx="1065.2" cy="279.1" rx="2.9" ry="2.4" transform="rotate(158 1065.2 279.1)"/>
<ellipse cx="1025.0" cy="242.2" rx="4.3" ry="2.9" transform="rotate(16 1025.0 242.2)"/>
<ellipse cx="1032.7" cy="277.8" rx="3.8" ry="1.9" transform="rotate(136 1032.7 277.8)"/>
<ellipse cx="1007.3" cy="239.8" rx="3.9" ry="2.5" transform="rotate(72 1007.3 239.8)"/>
<ellipse cx="1053.4" cy="255.1" rx="1.7" ry="3.4" transform="rotate(91 1053.4 255.1)"/>
<ellipse cx="1033.1" cy="231.1" rx="4.2" ry="3.5" transform="rotate(164 1033.1 231.1)"/>
<ellipse cx="1015.8" cy="273.7" rx="2.2" ry="1.5" transform="rotate(40 1015.8 273.7)"/>
<ellipse cx="1033.9" cy="279.2" rx="2.9" ry="3.7" transform="rotate(117 1033.9 279.2)"/>
<ellipse cx="1061.8" cy="237.8" rx="1.7" ry="1.9" transform="rotate(101 1061.8 237.8)"/>
<ellipse cx="1007.1" cy="267.3" rx="2.8" ry="2.8" transform="rotate(37 1007.1 267.3)"/>
<ellipse cx="1027.8" cy="239.7" rx="2.1" ry="1.7" transform="rotate(98 1027.8 239.7)"/>
<ellipse cx="1059.4" cy="344.4" rx="4.9" ry="2.0" transform="rotate(32 1059.4 344.4)"/>
<ellipse cx="1080.2" cy="283.5" rx="4.7" ry="2.3" transform="rotate(155 1080.2 283.5)"/>
<ellipse cx="1085.6" cy="311.0" rx="4.7" ry="3.1" transform="rotate(41 1085.6 311.0)"/>
<ellipse cx="1068.4" cy="348.5" rx="3.7" ry="3.0" transform="rotate(50 1068.4 348.5)"/>
<ellipse cx="1079.8" cy="294.6" rx="2.3" ry="2.5" transform="rotate(132 1079.8 294.6)"/>
<ellipse cx="1039.4" cy="308.7" rx="2.0" ry="3.9" transform="rotate(49 1039.4 308.7)"/>
<ellipse cx="1032.5" cy="325.0" rx="4.2" ry="1.6" transform="rotate(82 1032.5 325.0)"/>
<ellipse cx="1037.1" cy="328.0" rx="3.4" ry="3.1" transform="rotate(78 1037.1 328.0)"/>
<ellipse cx="1068.9" cy="304.7" rx="2.4" ry="2.5" transform="rotate(94 1068.9 304.7)"/>
<ellipse cx="1056.8" cy="315.1" rx="1.6" ry="3.0" transform="rotate(125 1056.8 315.1)"/>
<ellipse cx="1057.9" cy="315.7" rx="3.7" ry="3.5" transform="rotate(45 1057.9 315.7)"/>
<ellipse cx="1078.6" cy="312.0" rx="1.7" ry="2.4" transform="rotate(93 1078.6 312.0)"/>
<ellipse cx="1035.5" cy="315.4" rx="3.3" ry="1.6" transform="rotate(162 1035.5 315.4)"/>
<ellipse cx="1037.8" cy="353.8" rx="2.6" ry="3.3" transform="rotate(20 1037.8 353.8)"/>
<ellipse cx="1033.3" cy="320.3" rx="2.8" ry="3.9" transform="rotate(34 1033.3 320.3)"/>
<ellipse cx="1031.6" cy="285.3" rx="3.6" ry="3.2" transform="rotate(28 1031.6 285.3)"/>
<ellipse cx="1041.6" cy="358.5" rx="3.2" ry="3.9" transform="rotate(42 1041.6 358.5)"/>
<ellipse cx="1071.2" cy="337.7" rx="2.3" ry="3.6" transform="rotate(156 1071.2 337.7)"/>
<ellipse cx="1107.9" cy="359.5" rx="4.6" ry="2.2" transform="rotate(116 1107.9 359.5)"/>
<ellipse cx="1065.1" cy="380.1" rx="4.7" ry="2.0" transform="rotate(67 1065.1 380.1)"/>
<ellipse cx="1098.1" cy="364.2" rx="2.8" ry="2.0" transform="rotate(103 1098.1 364.2)"/>
<ellipse cx="1066.3" cy="406.2" rx="3.9" ry="3.7" transform="rotate(43 1066.3 406.2)"/>
<ellipse cx="1110.4" cy="365.9" rx="4.2" ry="1.6" transform="rotate(92 1110.4 365.9)"/>
<ellipse cx="1122.6" cy="377.2" rx="3.3" ry="3.2" transform="rotate(26 1122.6 377.2)"/>
<ellipse cx="1072.6" cy="382.1" rx="4.5" ry="3.3" transform="rotate(95 1072.6 382.1)"/>
<ellipse cx="1073.5" cy="409.4" rx="3.5" ry="2.4" transform="rotate(20 1073.5 409.4)"/>
<ellipse cx="1086.0" cy="360.6" rx="4.1" ry="1.6" transform="rotate(132 1086.0 360.6)"/>
<ellipse cx="1072.8" cy="388.4" rx="4.9" ry="3.0" transform="rotate(169 1072.8 388.4)"/>
<ellipse cx="1117.7" cy="394.0" rx="4.1" ry="2.1" transform="rotate(74 1117.7 394.0)"/>
<ellipse cx="1098.1" cy="375.9" rx="3.3" ry="3.7" transform="rotate(33 1098.1 375.9)"/>
<ellipse cx="1089.2" cy="386.8" rx="1.7" ry="1.6" transform="rotate(145 1089.2 386.8)"/>
<ellipse cx="1079.8" cy="356.4" rx="2.8" ry="2.1" transform="rotate(149 1079.8 356.4)"/>
<ellipse cx="1076.1" cy="358.0" rx="2.8" ry="3.6" transform="rotate(40 1076.1 358.0)"/>
<ellipse cx="1064.4" cy="406.2" rx="2.4" ry="1.9" transform="rotate(24 1064.4 406.2)"/>
<ellipse cx="1059.5" cy="358.7" rx="3.8" ry="2.2" transform="rotate(67 1059.5 358.7)"/>
<ellipse cx="1122.7" cy="353.4" rx="4.4" ry="3.7" transform="rotate(152 1122.7 353.4)"/>
<ellipse cx="1128.7" cy="427.8" rx="4.8" ry="3.3" transform="rotate(63 1128.7 427.8)"/>
<ellipse cx="1099.9" cy="410.0" rx="1.7" ry="1.6" transform="rotate(47 1099.9 410.0)"/>
<ellipse cx="1104.3" cy="412.3" rx="4.2" ry="1.5" transform="rotate(141 1104.3 412.3)"/>
<ellipse cx="1129.4" cy="417.9" rx="2.9" ry="2.8" transform="rotate(164 1129.4 417.9)"/>
<ellipse cx="1120.4" cy="435.7" rx="4.3" ry="1.9" transform="rotate(79 1120.4 435.7)"/>
<ellipse cx="1093.8" cy="435.0" rx="5.0" ry="3.3" transform="rotate(122 1093.8 435.0)"/>
<ellipse cx="1132.9" cy="410.3" rx="4.5" ry="3.4" transform="rotate(119 1132.9 410.3)"/>
<ellipse cx="1094.8" cy="436.2" rx="2.1" ry="4.0" transform="rotate(66 1094.8 436.2)"/>
<ellipse cx="1103.9" cy="411.6" rx="2.7" ry="3.4" transform="rotate(177 1103.9 411.6)"/>
<ellipse cx="1146.6" cy="420.5" rx="1.7" ry="3.1" transform="rotate(173 1146.6 420.5)"/>
<ellipse cx="1116.2" cy="441.5" rx="3.3" ry="2.2" transform="rotate(164 1116.2 441.5)"/>
<ellipse cx="1145.7" cy="445.8" rx="1.8" ry="2.8" transform="rotate(43 1145.7 445.8)"/>
<ellipse cx="1105.6" cy="419.4" rx="4.1" ry="3.9" transform="rotate(83 1105.6 419.4)"/>
<ellipse cx="1101.5" cy="425.5" rx="3.6" ry="2.4" transform="rotate(161 1101.5 425.5)"/>
<ellipse cx="1145.3" cy="449.3" rx="4.4" ry="2.8" transform="rotate(120 1145.3 449.3)"/>
<ellipse cx="1140.4" cy="437.9" rx="4.5" ry="2.6" transform="rotate(59 1140.4 437.9)"/>
<ellipse cx="1124.2" cy="422.3" rx="2.2" ry="3.1" transform="rotate(19 1124.2 422.3)"/>
<ellipse cx="1123.9" cy="416.9" rx="1.6" ry="1.8" transform="rotate(159 1123.9 416.9)"/>
<ellipse cx="985.7" cy="292.2" rx="2.0" ry="1.6" transform="rotate(10 985.7 292.2)"/>
<ellipse cx="938.3" cy="307.2" rx="1.6" ry="1.7" transform="rotate(11 938.3 307.2)"/>
<ellipse cx="933.9" cy="304.5" rx="2.8" ry="3.5" transform="rotate(136 933.9 304.5)"/>
<ellipse cx="983.5" cy="278.3" rx="4.5" ry="3.8" transform="rotate(98 983.5 278.3)"/>
<ellipse cx="936.4" cy="285.3" rx="1.9" ry="1.6" transform="rotate(162 936.4 285.3)"/>
<ellipse cx="935.2" cy="312.6" rx="3.7" ry="2.7" transform="rotate(33 935.2 312.6)"/>
<ellipse cx="935.9" cy="312.9" rx="2.2" ry="2.3" transform="rotate(108 935.9 312.9)"/>
<ellipse cx="945.7" cy="292.5" rx="4.8" ry="1.6" transform="rotate(94 945.7 292.5)"/>
<ellipse cx="984.6" cy="313.5" rx="3.6" ry="2.7" transform="rotate(73 984.6 313.5)"/>
<ellipse cx="967.1" cy="276.5" rx="2.9" ry="2.6" transform="rotate(25 967.1 276.5)"/>
<ellipse cx="950.8" cy="310.2" rx="3.4" ry="2.0" transform="rotate(23 950.8 310.2)"/>
<ellipse cx="964.5" cy="289.4" rx="3.0" ry="2.8" transform="rotate(73 964.5 289.4)"/>
<ellipse cx="975.7" cy="323.9" rx="1.5" ry="2.7" transform="rotate(125 975.7 323.9)"/>
<ellipse cx="971.7" cy="316.3" rx="4.9" ry="3.0" transform="rotate(131 971.7 316.3)"/>
<ellipse cx="945.6" cy="322.2" rx="2.5" ry="2.0" transform="rotate(179 945.6 322.2)"/>
<ellipse cx="943.9" cy="283.3" rx="4.8" ry="3.4" transform="rotate(125 943.9 283.3)"/>
<ellipse cx="977.3" cy="309.9" rx="4.3" ry="3.1" transform="rotate(91 977.3 309.9)"/>
<ellipse cx="935.7" cy="321.4" rx="4.6" ry="3.4" transform="rotate(108 935.7 321.4)"/>
<ellipse cx="1009.4" cy="342.0" rx="2.2" ry="2.2" transform="rotate(139 1009.4 342.0)"/>
<ellipse cx="990.1" cy="370.3" rx="4.6" ry="2.1" transform="rotate(117 990.1 370.3)"/>
<ellipse cx="971.3" cy="387.5" rx="3.9" ry="3.0" transform="rotate(8 971.3 387.5)"/>
<ellipse cx="982.4" cy="366.1" rx="2.0" ry="3.6" transform="rotate(169 982.4 366.1)"/>
<ellipse cx="992.7" cy="365.9" rx="3.1" ry="3.2" transform="rotate(65 992.7 365.9)"/>
<ellipse cx="994.0" cy="350.1" rx="3.1" ry="3.7" transform="rotate(60 994.0 350.1)"/>
<ellipse cx="990.4" cy="361.4" rx="4.1" ry="3.6" transform="rotate(158 990.4 361.4)"/>
<ellipse cx="972.7" cy="352.5" rx="2.4" ry="2.3" transform="rotate(133 972.7 352.5)"/>
<ellipse cx="982.4" cy="358.9" rx="4.8" ry="2.1" transform="rotate(26 982.4 358.9)"/>
<ellipse cx="973.2" cy="392.6" rx="2.2" ry="1.9" transform="rotate(37 973.2 392.6)"/>
<ellipse cx="1004.7" cy="398.7" rx="3.0" ry="2.0" transform="rotate(163 1004.7 398.7)"/>
<ellipse cx="1010.6" cy="362.5" rx="4.6" ry="2.7" transform="rotate(3 1010.6 362.5)"/>
<ellipse cx="985.0" cy="403.3" rx="3.9" ry="2.8" transform="rotate(161 985.0 403.3)"/>
<ellipse cx="979.8" cy="341.8" rx="2.4" ry="3.3" transform="rotate(1 979.8 341.8)"/>
<ellipse cx="1002.0" cy="412.6" rx="3.0" ry="2.9" transform="rotate(165 1002.0 412.6)"/>
<ellipse cx="986.1" cy="358.3" rx="4.0" ry="3.7" transform="rotate(164 986.1 358.3)"/>
<ellipse cx="1000.0" cy="408.2" rx="3.9" ry="3.1" transform="rotate(116 1000.0 408.2)"/>
<ellipse cx="986.6" cy="360.8" rx="4.0" ry="3.7" transform="rotate(62 986.6 360.8)"/>
<ellipse cx="1024.1" cy="450.7" rx="3.7" ry="2.1" transform="rotate(108 1024.1 450.7)"/>
<ellipse cx="1009.1" cy="416.0" rx="4.5" ry="2.8" transform="rotate(169 1009.1 416.0)"/>
<ellipse cx="1031.5" cy="424.2" rx="3.8" ry="3.4" transform="rotate(99 1031.5 424.2)"/>
<ellipse cx="1026.6" cy="460.4" rx="1.9" ry="2.1" transform="rotate(55 1026.6 460.4)"/>
<ellipse cx="993.0" cy="454.1" rx="4.8" ry="2.8" transform="rotate(25 993.0 454.1)"/>
<ellipse cx="1027.4" cy="437.8" rx="2.2" ry="2.7" transform="rotate(4 1027.4 437.8)"/>
<ellipse cx="1017.0" cy="456.4" rx="3.3" ry="2.5" transform="rotate(116 1017.0 456.4)"/>
<ellipse cx="995.5" cy="449.2" rx="2.9" ry="3.4" transform="rotate(31 995.5 449.2)"/>
<ellipse cx="1021.5" cy="445.7" rx="3.7" ry="2.1" transform="rotate(97 1021.5 445.7)"/>
<ellipse cx="1005.0" cy="415.7" rx="3.0" ry="2.6" transform="rotate(178 1005.0 415.7)"/>
<ellipse cx="1018.7" cy="444.0" rx="1.9" ry="2.3" transform="rotate(102 1018.7 444.0)"/>
<ellipse cx="1032.0" cy="441.4" rx="2.3" ry="3.5" transform="rotate(100 1032.0 441.4)"/>
<ellipse cx="1008.1" cy="423.2" rx="4.8" ry="1.7" transform="rotate(162 1008.1 423.2)"/>
<ellipse cx="994.7" cy="447.1" rx="4.0" ry="3.5" transform="rotate(37 994.7 447.1)"/>
<ellipse cx="1002.7" cy="446.9" rx="4.4" ry="3.5" transform="rotate(119 1002.7 446.9)"/>
<ellipse cx="1034.8" cy="453.0" rx="3.8" ry="3.4" transform="rotate(120 1034.8 453.0)"/>
<ellipse cx="1002.7" cy="457.5" rx="2.4" ry="2.4" transform="rotate(64 1002.7 457.5)"/>
<ellipse cx="1034.1" cy="448.9" rx="3.2" ry="3.5" transform="rotate(71 1034.1 448.9)"/>
<ellipse cx="934.3" cy="239.3" rx="2.6" ry="2.7" transform="rotate(159 934.3 239.3)"/>
<ellipse cx="945.5" cy="239.6" rx="2.8" ry="3.8" transform="rotate(98 945.5 239.6)"/>
<ellipse cx="922.3" cy="249.7" rx="4.7" ry="3.5" transform="rotate(35 922.3 249.7)"/>
<ellipse cx="941.2" cy="220.7" rx="3.5" ry="3.1" transform="rotate(53 941.2 220.7)"/>
<ellipse cx="958.1" cy="239.4" rx="2.4" ry="1.8" transform="rotate(36 958.1 239.4)"/>
<ellipse cx="954.2" cy="211.1" rx="3.1" ry="3.5" transform="rotate(53 954.2 211.1)"/>
<ellipse cx="956.2" cy="247.5" rx="2.1" ry="3.7" transform="rotate(155 956.2 247.5)"/>
<ellipse cx="959.1" cy="205.4" rx="4.7" ry="2.9" transform="rotate(162 959.1 205.4)"/>
<ellipse cx="953.6" cy="211.8" rx="3.9" ry="2.8" transform="rotate(112 953.6 211.8)"/>
<ellipse cx="946.8" cy="207.0" rx="1.9" ry="2.5" transform="rotate(35 946.8 207.0)"/>
<ellipse cx="938.9" cy="233.4" rx="3.2" ry="3.8" transform="rotate(179 938.9 233.4)"/>
<ellipse cx="939.7" cy="229.9" rx="3.4" ry="3.7" transform="rotate(1 939.7 229.9)"/>
<ellipse cx="926.4" cy="219.2" rx="3.9" ry="2.7" transform="rotate(75 926.4 219.2)"/>
<ellipse cx="953.6" cy="222.5" rx="3.0" ry="3.9" transform="rotate(19 953.6 222.5)"/>
<ellipse cx="927.2" cy="221.6" rx="3.8" ry="1.6" transform="rotate(11 927.2 221.6)"/>
<ellipse cx="947.3" cy="255.9" rx="2.7" ry="4.0" transform="rotate(130 947.3 255.9)"/>
<ellipse cx="939.4" cy="245.4" rx="2.0" ry="2.0" transform="rotate(106 939.4 245.4)"/>
<ellipse cx="945.0" cy="220.3" rx="4.5" ry="2.4" transform="rotate(121 945.0 220.3)"/>
<ellipse cx="1196.7" cy="302.2" rx="4.7" ry="2.2" transform="rotate(87 1196.7 302.2)"/>
<ellipse cx="1175.3" cy="302.2" rx="4.4" ry="2.2" transform="rotate(126 1175.3 302.2)"/>
<ellipse cx="1174.2" cy="300.1" rx="2.5" ry="2.8" transform="rotate(52 1174.2 300.1)"/>
<ellipse cx="1189.3" cy="311.7" rx="2.7" ry="2.3" transform="rotate(76 1189.3 311.7)"/>
<ellipse cx="1157.7" cy="318.9" rx="1.8" ry="4.0" transform="rotate(102 1157.7 318.9)"/>
<ellipse cx="1193.4" cy="315.4" rx="3.4" ry="1.6" transform="rotate(76 1193.4 315.4)"/>
<ellipse cx="1156.5" cy="281.9" rx="4.4" ry="2.7" transform="rotate(168 1156.5 281.9)"/>
<ellipse cx="1153.6" cy="300.0" rx="3.4" ry="2.4" transform="rotate(37 1153.6 300.0)"/>
<ellipse cx="1187.6" cy="307.9" rx="3.6" ry="3.2" transform="rotate(54 1187.6 307.9)"/>
<ellipse cx="1152.4" cy="305.3" rx="3.7" ry="1.9" transform="rotate(169 1152.4 305.3)"/>
<ellipse cx="1160.9" cy="281.5" rx="4.2" ry="3.8" transform="rotate(167 1160.9 281.5)"/>
<ellipse cx="1150.8" cy="314.9" rx="2.0" ry="2.3" transform="rotate(66 1150.8 314.9)"/>
<ellipse cx="1201.7" cy="287.4" rx="1.6" ry="1.6" transform="rotate(144 1201.7 287.4)"/>
<ellipse cx="1188.5" cy="317.4" rx="1.7" ry="2.9" transform="rotate(10 1188.5 317.4)"/>
<ellipse cx="1199.5" cy="311.0" rx="3.0" ry="3.2" transform="rotate(103 1199.5 311.0)"/>
<ellipse cx="1176.8" cy="280.6" rx="2.9" ry="3.0" transform="rotate(168 1176.8 280.6)"/>
<ellipse cx="1208.8" cy="299.0" rx="2.9" ry="1.8" transform="rotate(164 1208.8 299.0)"/>
<ellipse cx="1178.3" cy="315.8" rx="3.7" ry="2.6" transform="rotate(2 1178.3 315.8)"/>
<ellipse cx="1157.4" cy="184.9" rx="4.9" ry="1.7" transform="rotate(31 1157.4 184.9)"/>
<ellipse cx="1135.2" cy="180.7" rx="4.0" ry="2.1" transform="rotate(47 1135.2 180.7)"/>
<ellipse cx="1166.9" cy="194.6" rx="4.1" ry="3.2" transform="rotate(37 1166.9 194.6)"/>
<ellipse cx="1159.2" cy="183.4" rx="3.7" ry="3.3" transform="rotate(117 1159.2 183.4)"/>
<ellipse cx="1156.8" cy="215.6" rx="4.7" ry="1.6" transform="rotate(8 1156.8 215.6)"/>
<ellipse cx="1130.5" cy="180.6" rx="3.8" ry="3.5" transform="rotate(20 1130.5 180.6)"/>
<ellipse cx="1145.6" cy="192.5" rx="3.6" ry="3.9" transform="rotate(124 1145.6 192.5)"/>
<ellipse cx="1154.4" cy="192.7" rx="4.8" ry="3.3" transform="rotate(120 1154.4 192.7)"/>
<ellipse cx="1157.1" cy="185.8" rx="4.3" ry="2.4" transform="rotate(165 1157.1 185.8)"/>
<ellipse cx="1136.6" cy="212.1" rx="3.2" ry="3.4" transform="rotate(115 1136.6 212.1)"/>
<ellipse cx="1167.8" cy="211.4" rx="3.5" ry="2.2" transform="rotate(15 1167.8 211.4)"/>
<ellipse cx="1154.9" cy="206.0" rx="4.3" ry="3.0" transform="rotate(155 1154.9 206.0)"/>
<ellipse cx="1159.0" cy="180.6" rx="2.0" ry="3.6" transform="rotate(149 1159.0 180.6)"/>
<ellipse cx="1147.1" cy="215.5" rx="2.8" ry="3.2" transform="rotate(154 1147.1 215.5)"/>
<ellipse cx="1160.9" cy="189.4" rx="3.1" ry="3.2" transform="rotate(82 1160.9 189.4)"/>
<ellipse cx="1140.5" cy="196.9" rx="3.6" ry="3.5" transform="rotate(10 1140.5 196.9)"/>
<ellipse cx="1141.5" cy="185.6" rx="4.6" ry="4.0" transform="rotate(37 1141.5 185.6)"/>
<ellipse cx="1141.0" cy="214.0" rx="4.3" ry="3.2" transform="rotate(127 1141.0 214.0)"/>
<ellipse cx="1093.9" cy="243.4" rx="3.4" ry="3.5" transform="rotate(51 1093.9 243.4)"/>
<ellipse cx="1111.5" cy="268.9" rx="4.9" ry="2.3" transform="rotate(14 1111.5 268.9)"/>
<ellipse cx="1107.1" cy="258.6" rx="2.2" ry="2.1" transform="rotate(2 1107.1 258.6)"/>
<ellipse cx="1111.7" cy="258.4" rx="1.8" ry="3.5" transform="rotate(16 1111.7 258.4)"/>
<ellipse cx="1089.3" cy="263.2" rx="4.6" ry="3.7" transform="rotate(133 1089.3 263.2)"/>
<ellipse cx="1092.8" cy="260.2" rx="2.2" ry="2.0" transform="rotate(23 1092.8 260.2)"/>
<ellipse cx="1087.2" cy="268.0" rx="2.8" ry="2.9" transform="rotate(103 1087.2 268.0)"/>
<ellipse cx="1111.2" cy="274.3" rx="2.4" ry="3.8" transform="rotate(126 1111.2 274.3)"/>
<ellipse cx="1095.0" cy="244.2" rx="3.7" ry="3.5" transform="rotate(39 1095.0 244.2)"/>
<ellipse cx="1092.6" cy="241.2" rx="2.5" ry="3.0" transform="rotate(24 1092.6 241.2)"/>
<ellipse cx="1081.3" cy="279.6" rx="4.5" ry="2.7" transform="rotate(145 1081.3 279.6)"/>
<ellipse cx="1088.5" cy="277.0" rx="2.5" ry="1.7" transform="rotate(114 1088.5 277.0)"/>
<ellipse cx="1110.7" cy="272.8" rx="4.9" ry="2.1" transform="rotate(9 1110.7 272.8)"/>
<ellipse cx="1093.6" cy="279.8" rx="2.8" ry="1.6" transform="rotate(8 1093.6 279.8)"/>
<ellipse cx="1102.3" cy="274.8" rx="3.1" ry="3.9" transform="rotate(16 1102.3 274.8)"/>
<ellipse cx="1114.5" cy="265.6" rx="4.7" ry="3.3" transform="rotate(23 1114.5 265.6)"/>
<ellipse cx="1090.3" cy="262.6" rx="3.7" ry="3.9" transform="rotate(171 1090.3 262.6)"/>
<ellipse cx="1100.3" cy="247.3" rx="4.5" ry="2.4" transform="rotate(60 1100.3 247.3)"/>
<ellipse cx="919.7" cy="348.9" rx="1.6" ry="2.1" transform="rotate(90 919.7 348.9)"/>
<ellipse cx="882.4" cy="362.1" rx="1.6" ry="3.8" transform="rotate(66 882.4 362.1)"/>
<ellipse cx="911.5" cy="368.4" rx="3.8" ry="4.0" transform="rotate(14 911.5 368.4)"/>
<ellipse cx="884.0" cy="352.7" rx="1.5" ry="2.0" transform="rotate(76 884.0 352.7)"/>
<ellipse cx="903.6" cy="357.7" rx="3.8" ry="2.7" transform="rotate(95 903.6 357.7)"/>
<ellipse cx="890.3" cy="345.0" rx="3.2" ry="1.9" transform="rotate(61 890.3 345.0)"/>
<ellipse cx="912.3" cy="376.6" rx="4.6" ry="2.7" transform="rotate(49 912.3 376.6)"/>
<ellipse cx="912.0" cy="346.3" rx="4.4" ry="1.7" transform="rotate(158 912.0 346.3)"/>
<ellipse cx="914.7" cy="375.5" rx="2.0" ry="2.6" transform="rotate(24 914.7 375.5)"/>
<ellipse cx="917.0" cy="355.4" rx="1.6" ry="1.7" transform="rotate(86 917.0 355.4)"/>
<ellipse cx="892.9" cy="349.4" rx="1.9" ry="2.4" transform="rotate(84 892.9 349.4)"/>
<ellipse cx="888.9" cy="342.3" rx="4.0" ry="2.9" transform="rotate(37 888.9 342.3)"/>
<ellipse cx="897.6" cy="346.0" rx="3.0" ry="2.1" transform="rotate(6 897.6 346.0)"/>
<ellipse cx="890.8" cy="373.6" rx="2.7" ry="1.9" transform="rotate(125 890.8 373.6)"/>
<ellipse cx="884.4" cy="358.2" rx="3.2" ry="1.9" transform="rotate(131 884.4 358.2)"/>
<ellipse cx="882.3" cy="375.8" rx="3.8" ry="2.0" transform="rotate(122 882.3 375.8)"/>
<ellipse cx="913.4" cy="344.8" rx="4.1" ry="3.9" transform="rotate(110 913.4 344.8)"/>
<ellipse cx="919.6" cy="379.9" rx="4.7" ry="1.7" transform="rotate(74 919.6 379.9)"/>
</g>
<g fill="none" stroke="#d5dcec" stroke-width="1.9" stroke-linejoin="round">
<polyline points="858,193 857,269 842,319 837,323 829,326"/>
<polyline points="901,239 906,252 948,250 964,245"/>
<polyline points="906,252 905,280 876,308 842,319"/>
<polyline points="876,308 881,328 869,350 858,380 870,430 900,440 935,436 975,420 1000,400"/>
<polyline points="849,395 890,410 920,420"/>
<polyline points="829,218 845,222 858,230"/>
<polyline points="829,350 845,375 852,398"/>
<polyline points="1042,81 1103,102 1180,141 1227,174"/>
<polyline points="1103,92 1080,115 1068,132 1027,158"/>
<polyline points="1068,132 1086,169 1111,187 1162,220 1227,255"/>
<polyline points="1027,110 1052,128 1068,132"/>
<polyline points="1154,138 1154,158 1137,179 1111,187"/>
<polyline points="1154,158 1200,184 1193,220 1180,277"/>
<polyline points="1221,150 1202,180 1193,220"/>
<polyline points="1027,210 1065,207 1111,187"/>
<polyline points="1027,182 1042,192 1047,220 1058,277"/>
<polyline points="1111,187 1086,220 1065,260"/>
<polyline points="1078,256 1162,224 1193,220"/>
<polyline points="1193,220 1227,210"/>
<polyline points="829,128 870,135 893,140 935,160"/>
<polyline points="905,124 915,123 945,133"/>
<polyline points="970,81 977,122 992,164 1027,166"/>
<polyline points="962,92 962,121 964,140 970,170"/>
<polyline points="935,160 960,150 1000,140 1027,150"/>
<polyline points="964,200 1000,175 1027,158"/>
<polyline points="920,390 935,400 935,450 920,476"/>
<polyline points="985,420 980,476"/>
<polyline points="1035,340 1070,300 1110,280 1150,250 1200,220"/>
<polyline points="1080,390 1130,330 1180,290 1227,250"/>
<polyline points="1100,400 1150,370 1200,330 1227,315"/>
<polyline points="1060,280 1100,250 1130,230"/>
<polyline points="1120,430 1180,410 1227,400"/>
<polyline points="1130,360 1180,355 1227,360"/>
<polyline points="1000,260 1010,300 990,330"/>
<polyline points="960,300 975,330 990,350"/>
</g>
<g fill="none" stroke="#f3f3f4" stroke-width="0.7" stroke-linejoin="round">
<polyline points="858,193 857,269 842,319 837,323 829,326"/>
<polyline points="901,239 906,252 948,250 964,245"/>
<polyline points="906,252 905,280 876,308 842,319"/>
<polyline points="876,308 881,328 869,350 858,380 870,430 900,440 935,436 975,420 1000,400"/>
<polyline points="849,395 890,410 920,420"/>
<polyline points="829,218 845,222 858,230"/>
<polyline points="829,350 845,375 852,398"/>
<polyline points="1042,81 1103,102 1180,141 1227,174"/>
<polyline points="1103,92 1080,115 1068,132 1027,158"/>
<polyline points="1068,132 1086,169 1111,187 1162,220 1227,255"/>
<polyline points="1027,110 1052,128 1068,132"/>
<polyline points="1154,138 1154,158 1137,179 1111,187"/>
<polyline points="1154,158 1200,184 1193,220 1180,277"/>
<polyline points="1221,150 1202,180 1193,220"/>
<polyline points="1027,210 1065,207 1111,187"/>
<polyline points="1027,182 1042,192 1047,220 1058,277"/>
<polyline points="1111,187 1086,220 1065,260"/>
<polyline points="1078,256 1162,224 1193,220"/>
<polyline points="1193,220 1227,210"/>
<polyline points="829,128 870,135 893,140 935,160"/>
<polyline points="905,124 915,123 945,133"/>
<polyline points="970,81 977,122 992,164 1027,166"/>
<polyline points="962,92 962,121 964,140 970,170"/>
<polyline points="935,160 960,150 1000,140 1027,150"/>
<polyline points="964,200 1000,175 1027,158"/>
<polyline points="920,390 935,400 935,450 920,476"/>
<polyline points="985,420 980,476"/>
<polyline points="1035,340 1070,300 1110,280 1150,250 1200,220"/>
<polyline points="1080,390 1130,330 1180,290 1227,250"/>
<polyline points="1100,400 1150,370 1200,330 1227,315"/>
<polyline points="1060,280 1100,250 1130,230"/>
<polyline points="1120,430 1180,410 1227,400"/>
<polyline points="1130,360 1180,355 1227,360"/>
<polyline points="1000,260 1010,300 990,330"/>
<polyline points="960,300 975,330 990,350"/>
</g>
<path d="M829,78 H948 L942,85 L934,91 L926,95 L900,97.5 L880,92 L855,96 L835,104 L829,106 Z" fill="#72d2e8"/>
<path d="M833,104 L855,96 L880,92 L897,101 L885,118 L872,132 L852,112 Z" fill="#a8dcc4"/>
<polyline points="872,132 865,153 861,170 862,186 869,197 883,216 894,226 906,225 908,231 901,239" fill="none" stroke="#93d0b8" stroke-width="2.2"/>
<path d="M909,280 L911,290 L913,297 L908,305 L902,312 L896,313 L888,316 L882,322 L877,330 L874,334 L872,332 L878,322 L884,314 L892,310 L900,308 L905,298 L907,288 Z" fill="#72d2e8"/>
<ellipse cx="858" cy="295" rx="2.5" ry="2" fill="#72d2e8"/><ellipse cx="873" cy="301" rx="2" ry="1.8" fill="#72d2e8"/>
<polygon points="899,128 901,136 909,152 919,167 926,184 935,202 944,222 954,242 961,263 967,273 969,283 974,286 972,298 975,302 982,313 987,314 1001,326 1001,338 1003,356 1008,377 1013,400 1018,410 1033,421 1042,435 1052,455 1057,476 1140,476 1134,460 1132,455 1125,440 1115,428 1105,411 1098,397 1091,387 1076,372 1057,368 1053,353 1050,342 1046,334 1043,318 1041,305 1039,293 1033,283 1023,273 1013,253 1007,242 1000,232 997,227 987,209 977,194 967,181 964,177 956,175 954,171 956,140 959,128 956,127 949,158 947,171 935,177 927,169 916,152 907,136 905,128" fill="#72d2e8"/>
<polyline points="829,328.5 918,328.5" fill="none" stroke="#fff" stroke-width="3" stroke-opacity="0.9"/><polyline points="829,328.5 918,328.5" fill="none" stroke="#222" stroke-width="1.3"/>
<polyline points="918,328 925,334 937,333 940,323 952,321 957,308 972,300" fill="none" stroke="#333" stroke-width="1.2" stroke-dasharray="5,3"/>
<polyline points="940,328.5 1001,328.5" fill="none" stroke="#222" stroke-width="1.2" stroke-dasharray="5,3"/>
<polyline points="944,95 948,105 956,141 982,147 998,129 1015,124 1027,112 1005,88 1030,77" fill="none" stroke="#333" stroke-width="1"/>
<polyline points="1087,77 1104,88 1120,96 1180,146 1227,150" fill="none" stroke="#333" stroke-width="1"/>
<polyline points="1028,435 1016,439 1004,449 1001,476" fill="none" stroke="#333" stroke-width="1.2"/>
<polyline points="1143,476 1143,459 1144,437 1149,436 1227,442" fill="none" stroke="#333" stroke-width="1.2"/>
<text x="935" y="105" font-size="16" fill="#333" stroke="#fff" stroke-width="2.5" paint-order="stroke" >以色列</text>
<text x="990" y="86" font-size="16" fill="#333" stroke="#fff" stroke-width="2.5" paint-order="stroke" >约旦</text>
<text x="825" y="213" font-size="16" fill="#333" stroke="#fff" stroke-width="2.5" paint-order="stroke" >埃及</text>
<text x="1042" y="248" font-size="14" fill="#333" stroke="#fff" stroke-width="2.5" paint-order="stroke" >麦地那</text>
<text x="1104" y="261" font-size="13" fill="#333" stroke="#fff" stroke-width="2.5" paint-order="stroke" text-anchor="end">المدينة المنورة</text>
<text x="1153" y="295" font-size="16" fill="#333" stroke="#fff" stroke-width="2.5" paint-order="stroke" >沙特阿拉伯</text>
<text x="1203" y="243" font-size="14" fill="#333" stroke="#fff" stroke-width="2.5" paint-order="stroke" >利雅</text>
<text x="1217" y="150" font-size="16" fill="#333" stroke="#fff" stroke-width="2.5" paint-order="stroke" >科</text>
<text x="1040" y="322" font-size="14" fill="#333" stroke="#fff" stroke-width="2.5" paint-order="stroke" >吉达</text>
<text x="1054" y="360" font-size="14" fill="#333" stroke="#fff" stroke-width="2.5" paint-order="stroke" >麦加</text>
<text x="1057" y="373" font-size="13" fill="#333" stroke="#fff" stroke-width="2.5" paint-order="stroke" >مكة</text>
<text x="1028" y="375" font-size="11" fill="#2f8ea8" >红海</text>
<text x="1113" y="404" font-size="12" fill="#333" stroke="#fff" stroke-width="2.5" paint-order="stroke" >艾卜哈</text>
<text x="1120" y="416" font-size="11" fill="#333" stroke="#fff" stroke-width="2.5" paint-order="stroke" >أبها</text>
<text x="881" y="464" font-size="14" fill="#333" stroke="#fff" stroke-width="2.5" paint-order="stroke" >喀土穆</text>
<text x="880" y="478" font-size="13" fill="#333" stroke="#fff" stroke-width="2.5" paint-order="stroke" >الخرطوم</text>
<text x="1154" y="467" font-size="14" fill="#333" stroke="#fff" stroke-width="2.5" paint-order="stroke" >萨纳</text>
<circle cx="1063" cy="267" r="2.5" fill="#fff" stroke="#333" stroke-width="1"/>
<circle cx="1068" cy="343" r="2.5" fill="#fff" stroke="#333" stroke-width="1"/>
<circle cx="1130" cy="412" r="2.5" fill="#fff" stroke="#333" stroke-width="1"/>
<circle cx="840" cy="85" r="10.5" fill="#2288ff" fill-opacity="0.25"/>
<path d="M833.5,91 L840,98 L846.5,91 Z" fill="#2288ff"/>
<circle cx="840" cy="85" r="9.4" fill="#2288ff"/>
<circle cx="840" cy="85" r="7" fill="#fff"/>
<circle cx="840" cy="85" r="3.8" fill="#2288ff"/>
<circle cx="853" cy="81" r="10.5" fill="#2288ff" fill-opacity="0.25"/>
<path d="M846.5,87 L853,94 L859.5,87 Z" fill="#2288ff"/>
<circle cx="853" cy="81" r="9.4" fill="#2288ff"/>
<circle cx="853" cy="81" r="7" fill="#fff"/>
<circle cx="853" cy="81" r="3.8" fill="#2288ff"/>
<circle cx="864" cy="96" r="10.5" fill="#2288ff" fill-opacity="0.25"/>
<path d="M857.5,102 L864,109 L870.5,102 Z" fill="#2288ff"/>
<circle cx="864" cy="96" r="9.4" fill="#2288ff"/>
<circle cx="864" cy="96" r="7" fill="#fff"/>
<circle cx="864" cy="96" r="3.8" fill="#2288ff"/>
<circle cx="869" cy="103" r="10.5" fill="#2288ff" fill-opacity="0.25"/>
<path d="M862.5,109 L869,116 L875.5,109 Z" fill="#2288ff"/>
<circle cx="869" cy="103" r="9.4" fill="#2288ff"/>
<circle cx="869" cy="103" r="7" fill="#fff"/>
<circle cx="869" cy="103" r="3.8" fill="#2288ff"/>
<circle cx="853" cy="106" r="10.5" fill="#2288ff" fill-opacity="0.25"/>
<path d="M846.5,112 L853,119 L859.5,112 Z" fill="#2288ff"/>
<circle cx="853" cy="106" r="9.4" fill="#2288ff"/>
<circle cx="853" cy="106" r="7" fill="#fff"/>
<circle cx="853" cy="106" r="3.8" fill="#2288ff"/>
<circle cx="881" cy="111" r="10.5" fill="#2288ff" fill-opacity="0.25"/>
<path d="M874.5,117 L881,124 L887.5,117 Z" fill="#2288ff"/>
<circle cx="881" cy="111" r="9.4" fill="#2288ff"/>
<circle cx="881" cy="111" r="7" fill="#fff"/>
<circle cx="881" cy="111" r="3.8" fill="#2288ff"/>
<circle cx="893" cy="100" r="10.5" fill="#2288ff" fill-opacity="0.25"/>
<path d="M886.5,106 L893,113 L899.5,106 Z" fill="#2288ff"/>
<circle cx="893" cy="100" r="9.4" fill="#2288ff"/>
<circle cx="893" cy="100" r="7" fill="#fff"/>
<circle cx="893" cy="100" r="3.8" fill="#2288ff"/>
<circle cx="895" cy="84" r="10.5" fill="#2288ff" fill-opacity="0.25"/>
<path d="M888.5,90 L895,97 L901.5,90 Z" fill="#2288ff"/>
<circle cx="895" cy="84" r="9.4" fill="#2288ff"/>
<circle cx="895" cy="84" r="7" fill="#fff"/>
<circle cx="895" cy="84" r="3.8" fill="#2288ff"/>
<circle cx="881" cy="79" r="10.5" fill="#2288ff" fill-opacity="0.25"/>
<path d="M874.5,85 L881,92 L887.5,85 Z" fill="#2288ff"/>
<circle cx="881" cy="79" r="9.4" fill="#2288ff"/>
<circle cx="881" cy="79" r="7" fill="#fff"/>
<circle cx="881" cy="79" r="3.8" fill="#2288ff"/>
<circle cx="898" cy="117" r="10.5" fill="#2288ff" fill-opacity="0.25"/>
<path d="M891.5,123 L898,130 L904.5,123 Z" fill="#2288ff"/>
<circle cx="898" cy="117" r="9.4" fill="#2288ff"/>
<circle cx="898" cy="117" r="7" fill="#fff"/>
<circle cx="898" cy="117" r="3.8" fill="#2288ff"/>
<circle cx="869" cy="116" r="10.5" fill="#2288ff" fill-opacity="0.25"/>
<path d="M862.5,122 L869,129 L875.5,122 Z" fill="#2288ff"/>
<circle cx="869" cy="116" r="9.4" fill="#2288ff"/>
<circle cx="869" cy="116" r="7" fill="#fff"/>
<circle cx="869" cy="116" r="3.8" fill="#2288ff"/>
<circle cx="895" cy="125" r="10.5" fill="#2288ff" fill-opacity="0.25"/>
<path d="M888.5,131 L895,138 L901.5,131 Z" fill="#2288ff"/>
<circle cx="895" cy="125" r="9.4" fill="#2288ff"/>
<circle cx="895" cy="125" r="7" fill="#fff"/>
<circle cx="895" cy="125" r="3.8" fill="#2288ff"/>
<circle cx="960" cy="82" r="10.5" fill="#2288ff" fill-opacity="0.25"/>
<path d="M953.5,88 L960,95 L966.5,88 Z" fill="#2288ff"/>
<circle cx="960" cy="82" r="9.4" fill="#2288ff"/>
<circle cx="960" cy="82" r="7" fill="#fff"/>
<circle cx="960" cy="82" r="3.8" fill="#2288ff"/>
<circle cx="955" cy="128" r="10.5" fill="#2288ff" fill-opacity="0.25"/>
<path d="M948.5,134 L955,141 L961.5,134 Z" fill="#2288ff"/>
<circle cx="955" cy="128" r="9.4" fill="#2288ff"/>
<circle cx="955" cy="128" r="7" fill="#fff"/>
<circle cx="955" cy="128" r="3.8" fill="#2288ff"/>
<circle cx="941" cy="169" r="10.5" fill="#2288ff" fill-opacity="0.25"/>
<path d="M934.5,175 L941,182 L947.5,175 Z" fill="#2288ff"/>
<circle cx="941" cy="169" r="9.4" fill="#2288ff"/>
<circle cx="941" cy="169" r="7" fill="#fff"/>
<circle cx="941" cy="169" r="3.8" fill="#2288ff"/>
<circle cx="860" cy="198" r="10.5" fill="#2288ff" fill-opacity="0.25"/>
<path d="M853.5,204 L860,211 L866.5,204 Z" fill="#2288ff"/>
<circle cx="860" cy="198" r="9.4" fill="#2288ff"/>
<circle cx="860" cy="198" r="7" fill="#fff"/>
<circle cx="860" cy="198" r="3.8" fill="#2288ff"/>
<circle cx="890" cy="201" r="10.5" fill="#2288ff" fill-opacity="0.25"/>
<path d="M883.5,207 L890,214 L896.5,207 Z" fill="#2288ff"/>
<circle cx="890" cy="201" r="9.4" fill="#2288ff"/>
<circle cx="890" cy="201" r="7" fill="#fff"/>
<circle cx="890" cy="201" r="3.8" fill="#2288ff"/>
<circle cx="908" cy="215" r="10.5" fill="#2288ff" fill-opacity="0.25"/>
<path d="M901.5,221 L908,228 L914.5,221 Z" fill="#2288ff"/>
<circle cx="908" cy="215" r="9.4" fill="#2288ff"/>
<circle cx="908" cy="215" r="7" fill="#fff"/>
<circle cx="908" cy="215" r="3.8" fill="#2288ff"/>
<circle cx="939" cy="216" r="10.5" fill="#2288ff" fill-opacity="0.25"/>
<path d="M932.5,222 L939,229 L945.5,222 Z" fill="#2288ff"/>
<circle cx="939" cy="216" r="9.4" fill="#2288ff"/>
<circle cx="939" cy="216" r="7" fill="#fff"/>
<circle cx="939" cy="216" r="3.8" fill="#2288ff"/>
<circle cx="908" cy="267" r="10.5" fill="#2288ff" fill-opacity="0.25"/>
<path d="M901.5,273 L908,280 L914.5,273 Z" fill="#2288ff"/>
<circle cx="908" cy="267" r="9.4" fill="#2288ff"/>
<circle cx="908" cy="267" r="7" fill="#fff"/>
<circle cx="908" cy="267" r="3.8" fill="#2288ff"/>
<circle cx="1048" cy="309" r="10.5" fill="#2288ff" fill-opacity="0.25"/>
<path d="M1041.5,315 L1048,322 L1054.5,315 Z" fill="#2288ff"/>
<circle cx="1048" cy="309" r="9.4" fill="#2288ff"/>
<circle cx="1048" cy="309" r="7" fill="#fff"/>
<circle cx="1048" cy="309" r="3.8" fill="#2288ff"/>
<circle cx="1050" cy="332" r="10.5" fill="#2288ff" fill-opacity="0.25"/>
<path d="M1043.5,338 L1050,345 L1056.5,338 Z" fill="#2288ff"/>
<circle cx="1050" cy="332" r="9.4" fill="#2288ff"/>
<circle cx="1050" cy="332" r="7" fill="#fff"/>
<circle cx="1050" cy="332" r="3.8" fill="#2288ff"/>
<circle cx="1006" cy="377" r="10.5" fill="#2288ff" fill-opacity="0.25"/>
<path d="M999.5,383 L1006,390 L1012.5,383 Z" fill="#2288ff"/>
<circle cx="1006" cy="377" r="9.4" fill="#2288ff"/>
<circle cx="1006" cy="377" r="7" fill="#fff"/>
<circle cx="1006" cy="377" r="3.8" fill="#2288ff"/>
<circle cx="1126" cy="442" r="10.5" fill="#2288ff" fill-opacity="0.25"/>
<path d="M1119.5,448 L1126,455 L1132.5,448 Z" fill="#2288ff"/>
<circle cx="1126" cy="442" r="9.4" fill="#2288ff"/>
<circle cx="1126" cy="442" r="7" fill="#fff"/>
<circle cx="1126" cy="442" r="3.8" fill="#2288ff"/>
<circle cx="1056" cy="471" r="10.5" fill="#2288ff" fill-opacity="0.25"/>
<path d="M1049.5,477 L1056,484 L1062.5,477 Z" fill="#2288ff"/>
<circle cx="1056" cy="471" r="9.4" fill="#2288ff"/>
<circle cx="1056" cy="471" r="7" fill="#fff"/>
<circle cx="1056" cy="471" r="3.8" fill="#2288ff"/>
<circle cx="1222" cy="253" r="10.5" fill="#2288ff" fill-opacity="0.25"/>
<path d="M1215.5,259 L1222,266 L1228.5,259 Z" fill="#2288ff"/>
<circle cx="1222" cy="253" r="9.4" fill="#2288ff"/>
<circle cx="1222" cy="253" r="7" fill="#fff"/>
<circle cx="1222" cy="253" r="3.8" fill="#2288ff"/>
<path d="M1018.5,273 L1025,280 L1031.5,273 Z" fill="#f5492a"/>
<circle cx="1025" cy="267" r="9.4" fill="#f5492a"/>
<circle cx="1025" cy="267" r="7" fill="#fff"/>
<circle cx="1025" cy="267" r="3.8" fill="#f5492a"/>
<rect x="835" y="437" width="66" height="17" fill="#fff" fill-opacity="0.75"/>
<rect x="835" y="454" width="70" height="17" fill="#fff" fill-opacity="0.75"/>
<polyline points="835,437 835,470 M835,454" fill="none" stroke="#666" stroke-width="1.5"/>
<path d="M835,437 V472 M835,453.5 H901 V437 M835,454.5 H905 V470" fill="none" stroke="#666" stroke-width="1.5"/>
<text x="841" y="449" font-size="12" fill="#333">300 km</text>
<text x="841" y="467" font-size="12" fill="#333">200 mi</text>
<rect x="1065" y="459" width="162" height="17" fill="#fff" fill-opacity="0.7"/>
<text x="1070" y="471" font-size="12" fill="#2b7bb9">技术支持：明日数航&amp;云当网</text>
</g></svg><!--/MAP-->
<div class="abs card" style="left:829px;top:494px;width:398px;height:320px"></div>
<div class="abs" style="left:846px;top:504px;font-size:14px;font-weight:bold;line-height:22px;color:#222">同航线其他港口行情</div>
<div class="abs" style="left:1005px;top:504px;width:56px;height:20px;background:#fa8c16;border-radius:2px;color:#fff;font-size:11px;line-height:20px;text-align:center">今日更新</div>
<div class="abs" style="left:1085px;top:504px;width:70px;text-align:center;font-size:14px;line-height:20px;color:#333">20'GP</div>
<div class="abs" style="left:1155px;top:504px;width:70px;text-align:center;font-size:14px;line-height:20px;color:#333">40'GP</div>
<div class="abs" style="left:829px;top:533px;width:398px;height:1px;background:#eee"></div>
<div class="abs" style="left:829px;top:534px;width:398px;height:36px;background:#fffcf6"></div>
<div class="abs pr" style="left:846px;top:534px">BANDAR ABBAS(阿巴斯,伊朗)</div>
<div class="abs pv" style="left:1086px;top:534px;color:#117d3b">$4400</div>
<div class="abs pv" style="left:1156px;top:534px;color:#117d3b">$5350</div>
<div class="abs pr" style="left:846px;top:570px">SALALAH(塞拉莱,阿曼)</div>
<div class="abs pv" style="left:1086px;top:570px;">$5300</div>
<div class="abs pv" style="left:1156px;top:570px;">$7100</div>
<div class="abs pr" style="left:846px;top:606px">RIYADH(利雅得,沙特阿拉伯)</div>
<div class="abs pv" style="left:1086px;top:606px;">$5100</div>
<div class="abs pv" style="left:1156px;top:606px;">$6750</div>
<div class="abs pr" style="left:846px;top:642px">AJMAN(阿治曼,阿联酋)</div>
<div class="abs pv" style="left:1086px;top:642px;">$4900</div>
<div class="abs pv" style="left:1156px;top:642px;">$6650</div>
<div class="abs pr" style="left:846px;top:678px">UMM QASAR(乌姆盖斯尔,伊拉克)</div>
<div class="abs pv" style="left:1086px;top:678px;">$5100</div>
<div class="abs pv" style="left:1156px;top:678px;">$6700</div>
<div class="abs pr" style="left:846px;top:714px">BAHRAIN(巴林,巴林)</div>
<div class="abs pv" style="left:1086px;top:714px;">$5000</div>
<div class="abs pv" style="left:1156px;top:714px;">$6600</div>
<div class="abs pr" style="left:846px;top:750px">SHARJAH(沙迦,阿联酋)</div>
<div class="abs pv" style="left:1086px;top:750px;">$5000</div>
<div class="abs pv" style="left:1156px;top:750px;">$6600</div>
</body></html>
